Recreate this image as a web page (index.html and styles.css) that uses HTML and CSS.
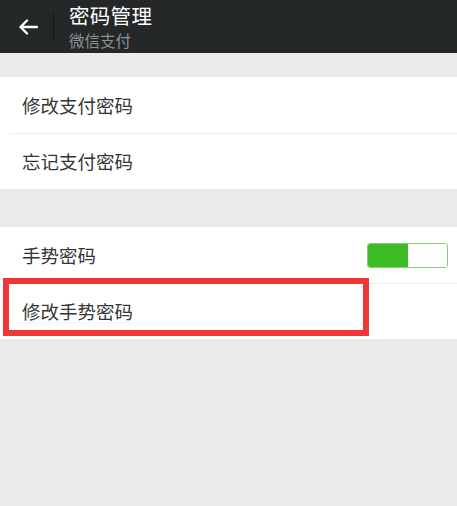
FILE: index.html
```html
<!DOCTYPE html>
<html lang="zh-CN">
<head>
<meta charset="utf-8">
<link rel="stylesheet" href="styles.css">
</head>
<body>
<header class="topbar">
  <div class="back">
    <svg width="20" height="16" viewBox="0 0 20 16"><path d="M19 8H2.5M9 1.5L2.5 8L9 14.5" fill="none" stroke="#fff" stroke-width="2.4" stroke-linecap="round" stroke-linejoin="round"/></svg>
  </div>
  <div class="vline"></div>
  <div class="titles">
    <div class="title">密码管理</div>
    <div class="subtitle">微信支付</div>
  </div>
</header>
<main class="page">
  <section class="group g1">
    <div class="row">修改支付密码</div>
    <div class="row">忘记支付密码</div>
  </section>
  <section class="group g2">
    <div class="row">
      <span>手势密码</span>
      <div class="toggle"><div class="on"></div><div class="off"></div></div>
    </div>
    <div class="row highlight-row">
      <span>修改手势密码</span>
      <div class="redbox"></div>
    </div>
  </section>
</main>
</body>
</html>
```
FILE: styles.css
```css
html, body {
  margin: 0;
  padding: 0;
}
body {
  width: 457px;
  height: 506px;
  background: #ebebeb;
  font-family: "Noto Sans CJK SC", "Noto Sans", sans-serif;
  overflow: hidden;
}
.topbar {
  height: 53px;
  background: #242829;
  display: flex;
  align-items: center;
}
.back {
  width: 53px;
  display: flex;
  justify-content: center;
  padding-left: 2px;
  box-sizing: border-box;
  padding-top: 1px;
}
.back svg { display: block; }
.vline {
  width: 1px;
  height: 28px;
  background: #121515;
}
.titles {
  margin-left: 15px;
  align-self: flex-start;
  padding-top: 3px;
  display: flex;
  flex-direction: column;
}
.title {
  color: #ffffff;
  font-size: 20.5px;
  line-height: 24px;
  height: 24px;
  letter-spacing: 0.3px;
}
.subtitle {
  color: #8d9192;
  font-size: 15.5px;
  line-height: 18px;
  height: 18px;
  margin-top: 4px;
}
.page {
  padding-top: 24px;
}
.group {
  background: #fff;
}
.g2 {
  margin-top: 38px;
}
.row {
  height: 56px;
  display: flex;
  align-items: center;
  justify-content: space-between;
  padding: 0 9px 0 22px;
  font-size: 18.5px;
  color: #353535;
  position: relative;
}
.row + .row::before {
  content: "";
  position: absolute;
  left: 10px;
  right: 0;
  top: 0;
  height: 1px;
  background: #ececec;
}
.toggle {
  width: 81px;
  height: 25px;
  border: 1px solid #86cc76;
  border-radius: 3px;
  box-sizing: border-box;
  display: flex;
  overflow: hidden;
}
.toggle .on {
  width: 40px;
  background: #3dbb25;
}
.toggle .off {
  flex: 1;
  background: #fff;
}
.redbox {
  position: absolute;
  left: 3px;
  top: -5px;
  width: 366px;
  height: 58px;
  border: 6px solid #ee3838;
  box-sizing: border-box;
}
```
